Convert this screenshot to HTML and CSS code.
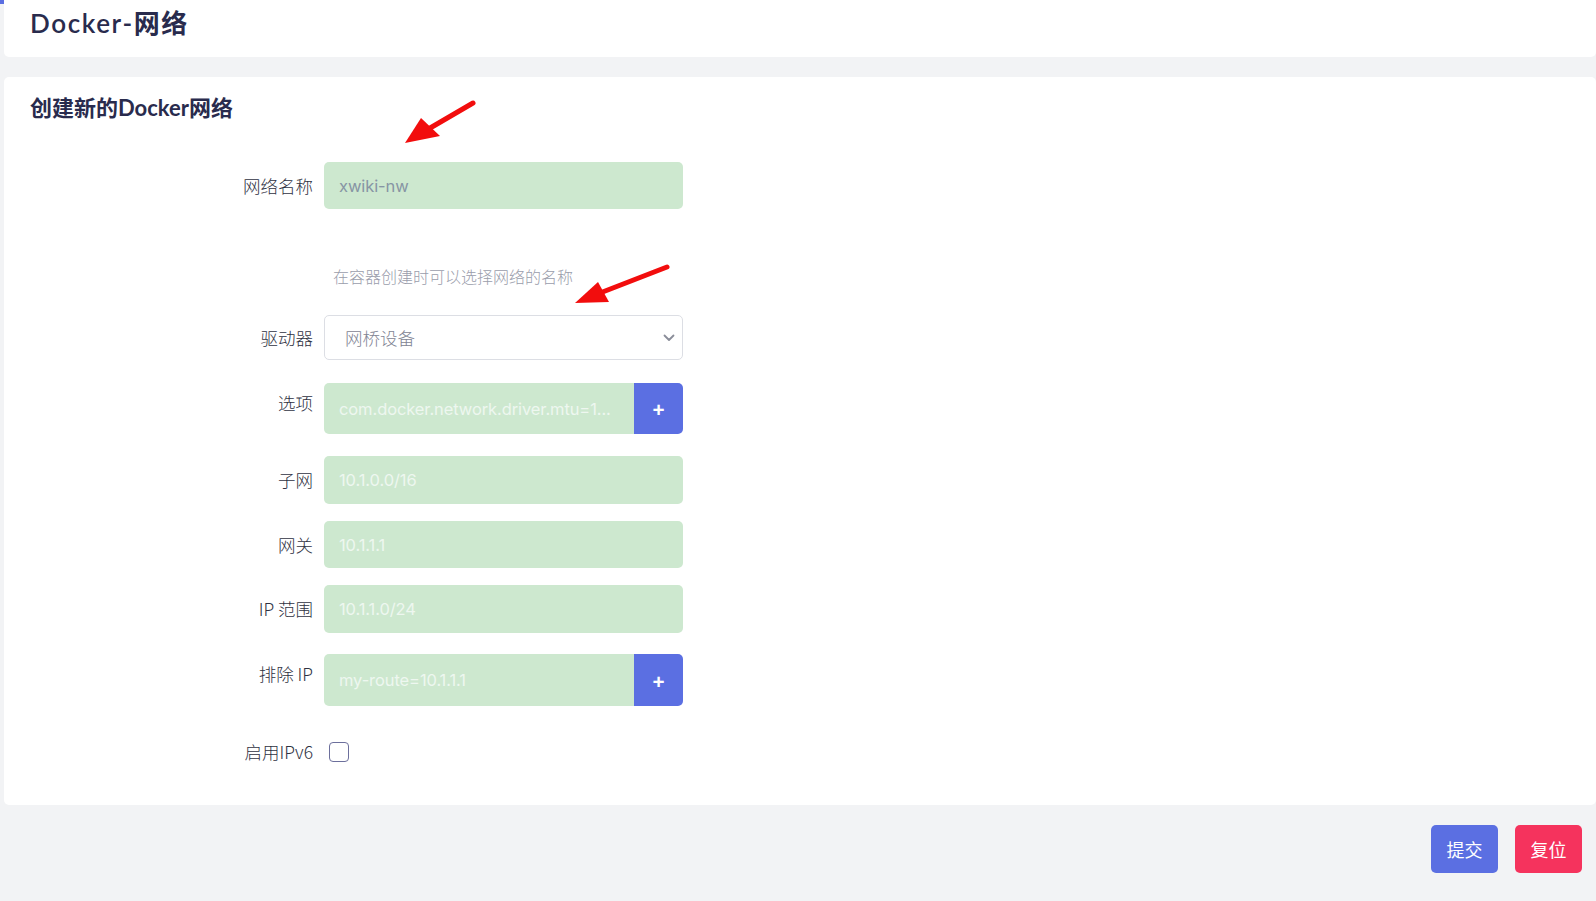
FILE: index.html
```html
<!DOCTYPE html>
<html>
<head>
  <title>Docker-网络</title>
  <meta charset="UTF-8">
  <link rel="stylesheet" href="styles.css">
</head>
<body>
  <div class="side"><div class="side-mark"></div></div>

  <div class="main">
    <div class="page-header">
      <h1>Docker-网络</h1>
    </div>

    <!-- create network form -->
    <div class="card">
      <h2>创建新的Docker网络</h2>

      <div class="row row-name">
        <label>网络名称</label>
        <input class="field" type="text" value="xwiki-nw">
      </div>

      <div class="row row-help">
        <span></span>
        <p class="help">在容器创建时可以选择网络的名称</p>
      </div>

      <div class="row row-driver">
        <label>驱动器</label>
        <div class="select">
          <span>网桥设备</span>
          <svg width="12" height="8" viewBox="0 0 12 8"><path d="M1.5 1.5 L6 6 L10.5 1.5" fill="none" stroke="#8a8d99" stroke-width="1.8" stroke-linecap="round" stroke-linejoin="round"/></svg>
        </div>
      </div>

      <div class="row row-opts top">
        <label>选项</label>
        <div class="group">
          <input class="field" type="text" placeholder="com.docker.network.driver.mtu=1...">
          <button class="add-btn">+</button>
        </div>
      </div>

      <div class="row row-subnet">
        <label>子网</label>
        <input class="field" type="text" placeholder="10.1.0.0/16">
      </div>

      <div class="row row-gw">
        <label>网关</label>
        <input class="field" type="text" placeholder="10.1.1.1">
      </div>

      <div class="row row-range">
        <label>IP 范围</label>
        <input class="field" type="text" placeholder="10.1.1.0/24">
      </div>

      <div class="row row-excl top">
        <label>排除 IP</label>
        <div class="group">
          <input class="field" type="text" placeholder="my-route=10.1.1.1">
          <button class="add-btn">+</button>
        </div>
      </div>

      <div class="row row-ipv6">
        <label>启用IPv6</label>
        <div><span class="check"></span></div>
      </div>
    </div>

    <div class="actions">
      <button class="btn btn-submit">提交</button>
      <button class="btn btn-reset">复位</button>
    </div>
  </div>

  <!-- red annotation arrows drawn over the screenshot -->
  <svg class="notes" width="1596" height="901">
    <line x1="473" y1="103" x2="425" y2="131" stroke="#f20d0d" stroke-width="5" stroke-linecap="round"/>
    <polygon points="405,143 440,136 421,118" fill="#f20d0d"/>
    <line x1="667" y1="267" x2="600" y2="293" stroke="#f20d0d" stroke-width="5" stroke-linecap="round"/>
    <polygon points="575,303 609,302 598,282" fill="#f20d0d"/>
  </svg>
</body>
</html>
```

FILE: styles.css
```css
html, body {
  margin: 0;
  padding: 0;
  background: #f2f3f5;
  font-family: "Noto Sans CJK SC", "Noto Sans", sans-serif;
  color: #3b3e4f;
}
body {
  display: flex;
  min-height: 901px;
}
.side {
  width: 4px;
  flex: none;
}
.side-mark {
  height: 4px;
  background: #5b6fe2;
}
.main {
  flex: 1;
}

.page-header {
  background: #fff;
  height: 57px;
  border-radius: 0 0 5px 5px;
  padding: 6px 26px 0;
  box-sizing: border-box;
}
.page-header h1 {
  margin: 0;
  font-family: "Lato", "Noto Sans CJK SC", sans-serif;
  font-weight: 600;
  font-size: 26px;
  line-height: 34px;
  letter-spacing: 1.6px;
  color: #292b4d;
}

.card {
  background: #fff;
  margin-top: 20px;
  border-radius: 5px;
  padding: 17px 26px 41px;
}
.card h2 {
  margin: 0;
  font-family: "Lato", "Noto Sans CJK SC", sans-serif;
  font-weight: 700;
  font-size: 22px;
  line-height: 27px;
  color: #292b4d;
}

.row {
  display: grid;
  grid-template-columns: 283px 359px;
  column-gap: 11px;
  align-items: center;
}
.row label {
  text-align: right;
  font-size: 17.5px;
  font-weight: 300;
  line-height: 24px;
  color: #2f3242;
}
.row.top {
  align-items: start;
}
.row.top label {
  padding-top: 8px;
}

.row-name   { margin-top: 41px; }
.row-help   { margin-top: 57px; }
.row-driver { margin-top: 29px; }
.row-opts   { margin-top: 23px; }
.row-subnet { margin-top: 22px; }
.row-gw     { margin-top: 17px; }
.row-range  { margin-top: 17px; }
.row-excl   { margin-top: 21px; }
.row-ipv6   { margin-top: 34px; }

.field {
  display: block;
  width: 100%;
  box-sizing: border-box;
  height: 47px;
  border: none;
  border-radius: 5px;
  background: #cde8cf;
  padding: 0 12px 0 15px;
  font-family: "Inter", sans-serif;
  font-size: 16.5px;
  letter-spacing: -0.1px;
  color: #8795a4;
  outline: none;
}
.field::placeholder {
  color: #eef7f0;
}
.row-subnet .field,
.row-range .field { height: 48px; }

.help {
  margin: 0;
  padding-left: 9px;
  font-size: 16px;
  font-weight: 300;
  line-height: 20px;
  color: #9a9dab;
}

.select {
  height: 45px;
  box-sizing: border-box;
  border: 1px solid #dcdee4;
  border-radius: 5px;
  display: flex;
  align-items: center;
  justify-content: space-between;
  padding: 0 7px 0 20px;
  font-size: 17.5px;
  font-weight: 300;
  color: #7f8493;
}

.group {
  display: flex;
  height: 51px;
}
.group .field {
  height: 100%;
  border-radius: 5px 0 0 5px;
}
.row-excl .group { height: 52px; }
.add-btn {
  flex: none;
  width: 49px;
  border: none;
  border-radius: 0 5px 5px 0;
  background: #5b6fe2;
  color: #fff;
  font-family: "Inter", sans-serif;
  font-size: 21px;
  font-weight: 600;
  padding: 0;
  cursor: pointer;
}

.check {
  display: block;
  width: 20px;
  height: 20px;
  margin-left: 5px;
  box-sizing: border-box;
  border: 1.5px solid #6c6f9c;
  border-radius: 4px;
  background: #fff;
}

.actions {
  display: flex;
  justify-content: flex-end;
  gap: 17px;
  margin-top: 20px;
  padding-right: 14px;
}
.btn {
  width: 67px;
  height: 48px;
  border: none;
  border-radius: 5px;
  color: #fff;
  font-family: "Noto Sans CJK SC", sans-serif;
  font-size: 18px;
  cursor: pointer;
}
.btn-submit { background: #5b6fe2; }
.btn-reset  { background: #f5335d; }

.notes {
  position: absolute;
  left: 0;
  top: 0;
  pointer-events: none;
}
```
